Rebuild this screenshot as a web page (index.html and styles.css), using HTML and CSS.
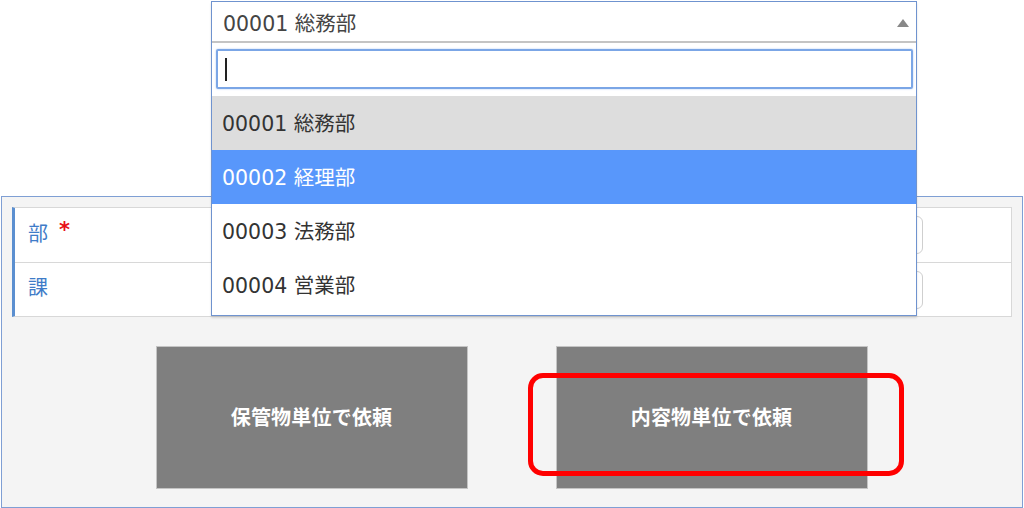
FILE: index.html
```html
<!DOCTYPE html>
<html lang="ja">
<head>
<meta charset="utf-8">
<title>部署選択</title>
<link rel="stylesheet" href="styles.css">
</head>
<body>
<div class="panel">
  <div class="table">
    <div class="row">
      <div class="label">部<span class="req">*</span></div>
      <div class="field"><div class="input"></div></div>
    </div>
    <div class="row">
      <div class="label">課</div>
      <div class="field"><div class="input"></div></div>
    </div>
  </div>
  <div class="actions">
    <div class="btn">保管物単位で依頼</div>
    <div class="btn">内容物単位で依頼</div>
  </div>
</div>

<div class="dropdown">
  <div class="selected">
    <span>00001 総務部</span>
    <span class="arrow"></span>
  </div>
  <div class="search">
    <div class="search-input"><span class="caret"></span></div>
  </div>
  <ul class="options">
    <li class="opt opt-current">00001 総務部</li>
    <li class="opt opt-hover">00002 経理部</li>
    <li class="opt">00003 法務部</li>
    <li class="opt">00004 営業部</li>
  </ul>
</div>

<div class="highlight"></div>
</body>
</html>
```

FILE: styles.css
```css
* { box-sizing: border-box; }
html, body { margin: 0; padding: 0; }
body {
  width: 1024px;
  height: 508px;
  overflow: hidden;
  background: #ffffff;
  font-family: "DejaVu Sans", "Noto Sans CJK JP", sans-serif;
  position: relative;
}

.panel {
  margin: 196px 0 0 1px;
  width: 1022px;
  height: 312px;
  border: 1px solid #7f9fd4;
  background: #f4f4f4;
  padding: 10px 10px 0 10px;
}

.table {
  background: #fff;
  border: 1px solid #d8d8d8;
  border-left: 3px solid #5b8fd0;
}
.row {
  display: flex;
  align-items: center;
  height: 54px;
}
.row + .row { border-top: 1px solid #d8d8d8; }

.label {
  width: 202px;
  padding-left: 13px;
  padding-bottom: 6px;
  font-family: "Noto Sans CJK JP", sans-serif;
  font-size: 20px;
  color: #3f7cc8;
  display: flex;
  align-items: center;
}
.req {
  color: #e8101a;
  font-family: "DejaVu Sans", sans-serif;
  font-size: 21px;
  font-weight: bold;
  margin-left: 11px;
  position: relative;
  top: -2px;
}
.field {
  flex: 1;
  padding-right: 88px;
}
.input {
  height: 38px;
  border: 1px solid #cfcfcf;
  border-radius: 6px;
  background: #fff;
}

.actions {
  display: flex;
  justify-content: center;
  gap: 88px;
  margin-top: 29px;
  padding-right: 1px;
}
.btn {
  width: 312px;
  height: 143px;
  background: #7f7f7f;
  border: 1px solid #c4c4c4;
  color: #fff;
  font-family: "Noto Sans CJK JP", sans-serif;
  font-weight: bold;
  font-size: 20px;
  letter-spacing: 0.2px;
  display: flex;
  align-items: center;
  justify-content: center;
  padding-bottom: 3px;
}

.dropdown {
  position: absolute;
  left: 211px;
  top: 1px;
  width: 706px;
  background: #fff;
  border: 1px solid #6f93cf;
  box-shadow: 0 2px 2px rgba(0,0,0,0.12);
  font-size: 20.5px;
}
.selected {
  height: 41px;
  display: flex;
  align-items: center;
  justify-content: space-between;
  padding: 0 7px 0 11px;
  color: #444;
  border-bottom: 2px solid #c4c4c4;
}
.arrow {
  width: 0;
  height: 0;
  border-left: 6px solid transparent;
  border-right: 6px solid transparent;
  border-bottom: 8px solid #888;
  margin-top: 2px;
}
.search {
  padding: 6px 3px 7px 4px;
}
.search-input {
  height: 40px;
  border: 2px solid #7ba6e6;
  border-radius: 2px;
  box-shadow: 0 0 2px #a9c6f2;
  padding: 7px 0 0 7px;
}
.caret {
  display: block;
  width: 2px;
  height: 23px;
  background: #222;
}
.options {
  list-style: none;
  margin: 0;
  padding: 0 0 3px 0;
}
.opt {
  height: 54px;
  display: flex;
  align-items: center;
  padding-left: 10px;
  padding-bottom: 2px;
  color: #333;
}
.opt-current { background: #dddddd; }
.opt-hover { background: #5897fb; color: #fff; }

.highlight {
  position: absolute;
  left: 528px;
  top: 373px;
  width: 376px;
  height: 103px;
  border: 5px solid #ff0000;
  border-radius: 15px;
}
```
